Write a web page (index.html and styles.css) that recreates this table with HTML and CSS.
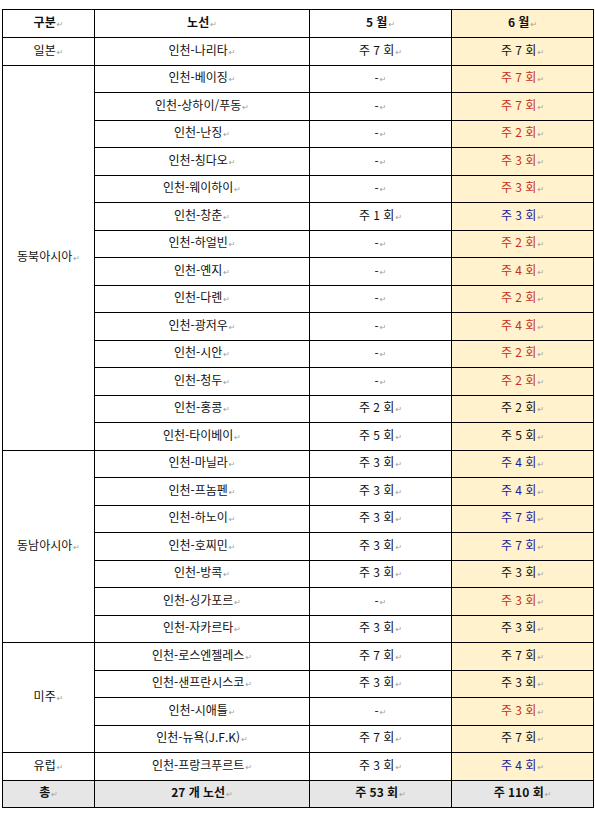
FILE: index.html
```html
<!DOCTYPE html>
<html lang="ko">
<head>
<meta charset="utf-8">
<link rel="stylesheet" href="styles.css">
</head>
<body>
<div class="wrap">
<table class="routes">
  <colgroup>
    <col class="c1"><col class="c2"><col class="c3"><col class="c4">
  </colgroup>
  <thead>
    <tr class="head">
      <th>구분<span class="pm">↵</span></th>
      <th>노선<span class="pm">↵</span></th>
      <th>5 월<span class="pm">↵</span></th>
      <th class="jun">6 월<span class="pm">↵</span></th>
    </tr>
  </thead>
  <tbody>
    <tr><td>일본<span class="pm">↵</span></td><td>인천-나리타<span class="pm">↵</span></td><td>주 7 회<span class="pm">↵</span></td><td class="jun">주 7 회<span class="pm">↵</span></td></tr>

    <tr><td rowspan="14">동북아시아<span class="pm">↵</span></td><td>인천-베이징<span class="pm">↵</span></td><td>-<span class="pm">↵</span></td><td class="jun red">주 7 회<span class="pm">↵</span></td></tr>
    <tr><td>인천-상하이/푸동<span class="pm">↵</span></td><td>-<span class="pm">↵</span></td><td class="jun red">주 7 회<span class="pm">↵</span></td></tr>
    <tr><td>인천-난징<span class="pm">↵</span></td><td>-<span class="pm">↵</span></td><td class="jun red">주 2 회<span class="pm">↵</span></td></tr>
    <tr><td>인천-칭다오<span class="pm">↵</span></td><td>-<span class="pm">↵</span></td><td class="jun red">주 3 회<span class="pm">↵</span></td></tr>
    <tr><td>인천-웨이하이<span class="pm">↵</span></td><td>-<span class="pm">↵</span></td><td class="jun red">주 3 회<span class="pm">↵</span></td></tr>
    <tr><td>인천-창춘<span class="pm">↵</span></td><td>주 1 회<span class="pm">↵</span></td><td class="jun blue">주 3 회<span class="pm">↵</span></td></tr>
    <tr><td>인천-하얼빈<span class="pm">↵</span></td><td>-<span class="pm">↵</span></td><td class="jun red">주 2 회<span class="pm">↵</span></td></tr>
    <tr><td>인천-옌지<span class="pm">↵</span></td><td>-<span class="pm">↵</span></td><td class="jun red">주 4 회<span class="pm">↵</span></td></tr>
    <tr><td>인천-다롄<span class="pm">↵</span></td><td>-<span class="pm">↵</span></td><td class="jun red">주 2 회<span class="pm">↵</span></td></tr>
    <tr><td>인천-광저우<span class="pm">↵</span></td><td>-<span class="pm">↵</span></td><td class="jun red">주 4 회<span class="pm">↵</span></td></tr>
    <tr><td>인천-시안<span class="pm">↵</span></td><td>-<span class="pm">↵</span></td><td class="jun red">주 2 회<span class="pm">↵</span></td></tr>
    <tr><td>인천-청두<span class="pm">↵</span></td><td>-<span class="pm">↵</span></td><td class="jun red">주 2 회<span class="pm">↵</span></td></tr>
    <tr><td>인천-홍콩<span class="pm">↵</span></td><td>주 2 회<span class="pm">↵</span></td><td class="jun">주 2 회<span class="pm">↵</span></td></tr>
    <tr><td>인천-타이베이<span class="pm">↵</span></td><td>주 5 회<span class="pm">↵</span></td><td class="jun">주 5 회<span class="pm">↵</span></td></tr>

    <tr><td rowspan="7">동남아시아<span class="pm">↵</span></td><td>인천-마닐라<span class="pm">↵</span></td><td>주 3 회<span class="pm">↵</span></td><td class="jun blue">주 4 회<span class="pm">↵</span></td></tr>
    <tr><td>인천-프놈펜<span class="pm">↵</span></td><td>주 3 회<span class="pm">↵</span></td><td class="jun blue">주 4 회<span class="pm">↵</span></td></tr>
    <tr><td>인천-하노이<span class="pm">↵</span></td><td>주 3 회<span class="pm">↵</span></td><td class="jun blue">주 7 회<span class="pm">↵</span></td></tr>
    <tr><td>인천-호찌민<span class="pm">↵</span></td><td>주 3 회<span class="pm">↵</span></td><td class="jun blue">주 7 회<span class="pm">↵</span></td></tr>
    <tr><td>인천-방콕<span class="pm">↵</span></td><td>주 3 회<span class="pm">↵</span></td><td class="jun">주 3 회<span class="pm">↵</span></td></tr>
    <tr><td>인천-싱가포르<span class="pm">↵</span></td><td>-<span class="pm">↵</span></td><td class="jun red">주 3 회<span class="pm">↵</span></td></tr>
    <tr><td>인천-자카르타<span class="pm">↵</span></td><td>주 3 회<span class="pm">↵</span></td><td class="jun">주 3 회<span class="pm">↵</span></td></tr>

    <tr><td rowspan="4">미주<span class="pm">↵</span></td><td>인천-로스엔젤레스<span class="pm">↵</span></td><td>주 7 회<span class="pm">↵</span></td><td class="jun">주 7 회<span class="pm">↵</span></td></tr>
    <tr><td>인천-샌프란시스코<span class="pm">↵</span></td><td>주 3 회<span class="pm">↵</span></td><td class="jun">주 3 회<span class="pm">↵</span></td></tr>
    <tr><td>인천-시애틀<span class="pm">↵</span></td><td>-<span class="pm">↵</span></td><td class="jun red">주 3 회<span class="pm">↵</span></td></tr>
    <tr><td>인천-뉴욕(J.F.K)<span class="pm">↵</span></td><td>주 7 회<span class="pm">↵</span></td><td class="jun">주 7 회<span class="pm">↵</span></td></tr>

    <tr><td>유럽<span class="pm">↵</span></td><td>인천-프랑크푸르트<span class="pm">↵</span></td><td>주 3 회<span class="pm">↵</span></td><td class="jun blue">주 4 회<span class="pm">↵</span></td></tr>

    <tr class="total"><td>총<span class="pm">↵</span></td><td>27 개 노선<span class="pm">↵</span></td><td>주 53 회<span class="pm">↵</span></td><td>주 110 회<span class="pm">↵</span></td></tr>
  </tbody>
</table>
</div>
</body>
</html>
```

FILE: styles.css
```css
html, body {
  margin: 0;
  padding: 0;
  background: #ffffff;
}

.wrap {
  padding: 9px 0 0 2px;
}

.routes {
  border-collapse: collapse;
  table-layout: fixed;
  width: 591px;
  font-family: "Noto Sans CJK KR", "Noto Sans", sans-serif;
  font-size: 12px;
  color: #111111;
}

.c1 { width: 92px; }
.c2 { width: 215px; }
.c3 { width: 142px; }
.c4 { width: 142px; }

.routes th,
.routes td {
  border: 1px solid #000000;
  padding: 0;
  height: 26.5px;
  text-align: center;
  vertical-align: middle;
  line-height: 14px;
  white-space: nowrap;
}

.routes .head th {
  height: 27px;
  font-weight: bold;
}

.jun {
  background: #fff2cc;
}

.red {
  color: #c8301e;
}

.blue {
  color: #1c1c9c;
}

.total td {
  background: #e7e6e6;
  font-weight: bold;
  height: 26px;
}

.pm {
  font-family: "DejaVu Sans", sans-serif;
  font-size: 8px;
  font-weight: normal;
  color: #a0a0a0;
  margin-left: 1px;
}
```
